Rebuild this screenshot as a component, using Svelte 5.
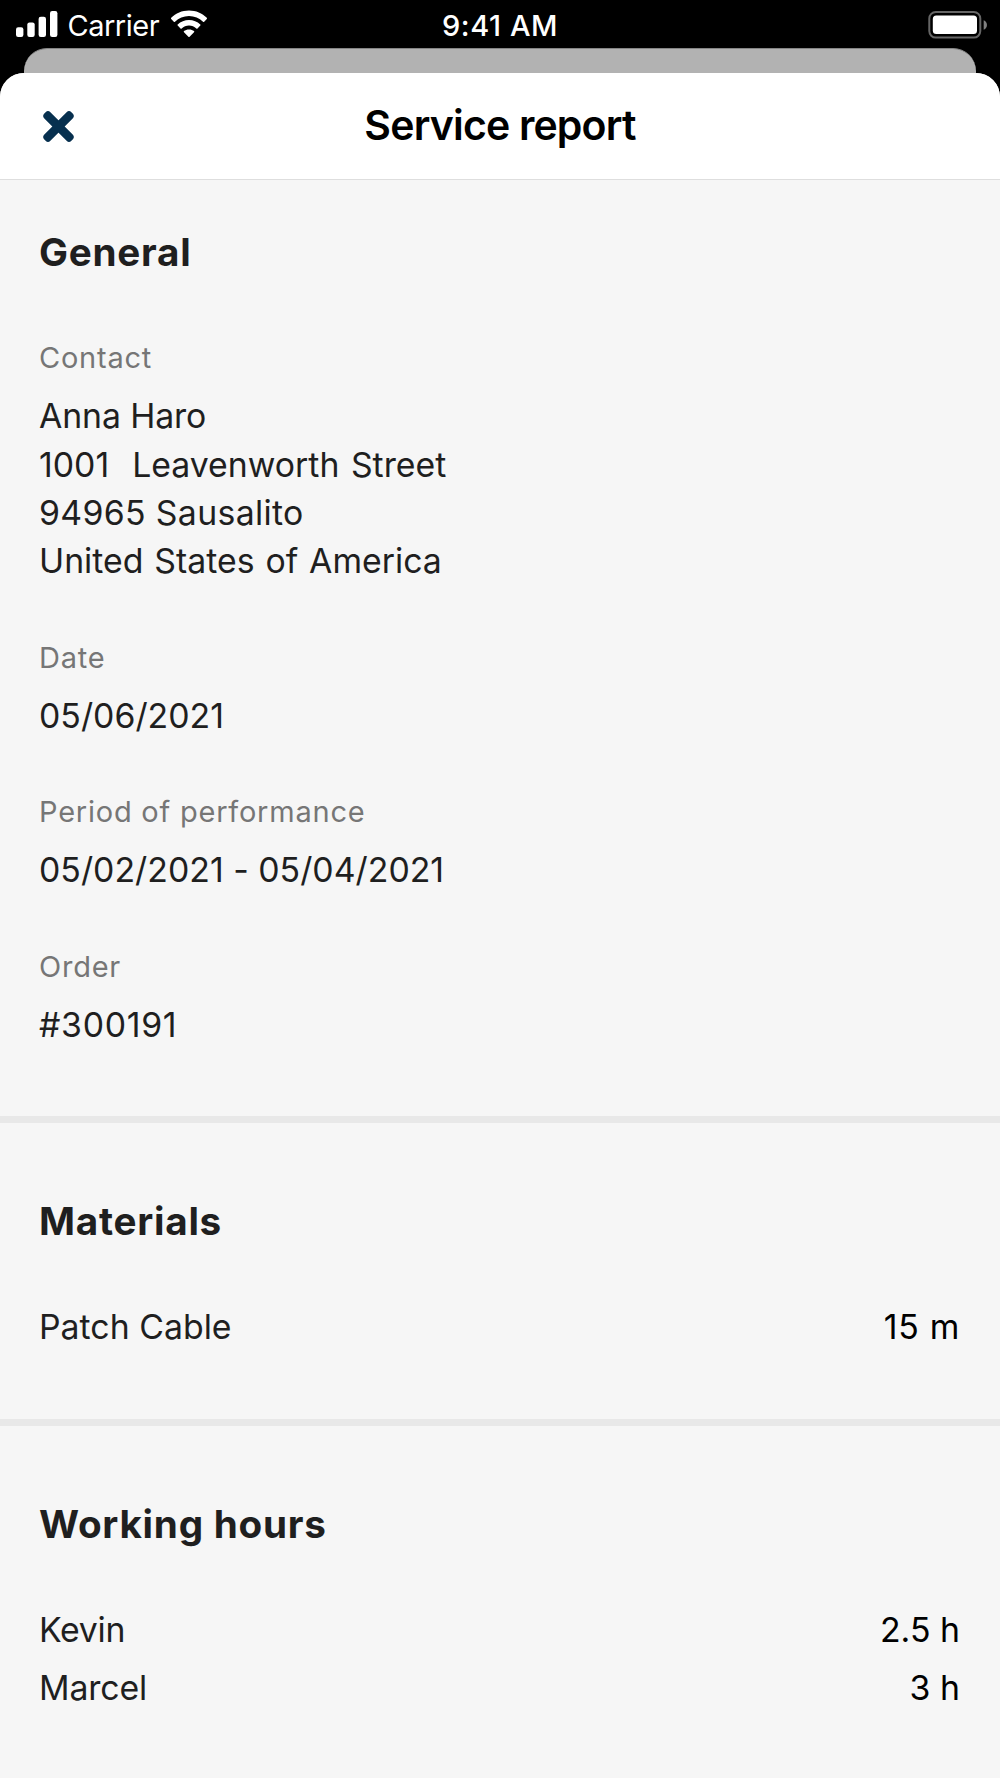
<script>
  const fields = [
    {
      label: 'Contact',
      lines: [
        { text: 'Anna Haro', fit: 'tight' },
        { text: '1001\u00a0 Leavenworth Street', fit: 'street' },
        { text: '94965 Sausalito', fit: 'loose' },
        { text: 'United States of America', fit: 'spaced' },
      ],
    },
    { label: 'Date', lines: [{ text: '05/06/2021', fit: 'plain' }] },
    { label: 'Period of performance', lines: [{ text: '05/02/2021 - 05/04/2021', fit: 'plain' }] },
    { label: 'Order', lines: [{ text: '#300191', fit: 'wide' }] },
  ];

  const lists = [
    { title: 'Materials', rows: [{ name: 'Patch Cable', fit: 'plain', amount: '15 m', amountFit: 'wide' }] },
    {
      title: 'Working hours',
      rows: [
        { name: 'Kevin', fit: 'tighter', amount: '2.5 h', amountFit: 'plain' },
        { name: 'Marcel', fit: 'tight', amount: '3 h', amountFit: 'plain' },
      ],
    },
  ];
</script>

<div class="screen">
  <div class="status">
    <div class="side">
      <svg class="signal" width="42" height="27" viewBox="0 0 42 27" fill="#fff">
        <rect x="0" y="16.2" width="7.4" height="9.8" rx="2.2" />
        <rect x="11.3" y="11.4" width="7.4" height="14.6" rx="2.2" />
        <rect x="22.6" y="5.8" width="7.4" height="20.2" rx="2.2" />
        <rect x="34" y="0" width="7.4" height="26" rx="2.2" />
      </svg>
      <span class="carrier">Carrier</span>
      <svg class="wifi" width="38" height="28" viewBox="0 0 38 28" fill="#fff">
        <path d="M19 .4C26 .4 32.3 3.2 36.8 7.7Q37.4 8.3 36.8 8.9L34.2 11.7Q33.6 12.3 33 11.7C29.3 8.2 24.4 6.1 19 6.1S8.7 8.2 5 11.7Q4.4 12.3 3.8 11.7L1.2 8.9Q.6 8.3 1.2 7.7C5.7 3.2 12 .4 19 .4Z" />
        <path d="M19 10C23.3 10 27.3 11.7 30.3 14.4Q30.9 15 30.3 15.6L27.5 18.4Q26.9 19 26.3 18.4C24.4 16.6 21.8 15.5 19 15.5S13.6 16.6 11.7 18.4Q11.1 19 10.5 18.4L7.7 15.6Q7.1 15 7.7 14.4C10.7 11.7 14.7 10 19 10Z" />
        <path d="M19 19.4C21 19.4 22.7 20.1 24 21.1Q24.6 21.7 24 22.3L19.6 26.7Q19 27.3 18.4 26.7L14 22.3Q13.4 21.7 14 21.1C15.3 20.1 17 19.4 19 19.4Z" />
      </svg>
    </div>
    <span class="clock">9:41 AM</span>
    <div class="side end">
      <svg width="60" height="28" viewBox="0 0 60 28">
        <rect x="1.3" y="1" width="51" height="25.6" rx="6.5" fill="none" stroke="#666" stroke-width="2" />
        <rect x="4.8" y="4.5" width="44.2" height="18.5" rx="3.5" fill="#fff" />
        <path d="M55.7 9.2C60 10.9 60 17.1 55.7 18.8Z" fill="#808080" />
      </svg>
    </div>
  </div>

  <div class="backdrop"></div>

  <main class="sheet">
    <header>
      <button aria-label="Close">
        <svg width="31" height="31" viewBox="-15.5 -15.5 31 31" fill="#07304f">
          <rect x="-19.15" y="-4.3" width="38.3" height="8.6" rx="3.4" transform="rotate(45)" />
          <rect x="-19.15" y="-4.3" width="38.3" height="8.6" rx="3.4" transform="rotate(-45)" />
        </svg>
      </button>
      <h1>Service report</h1>
    </header>

    <section class="general">
      <h2>General</h2>
      <dl>
        {#each fields as field}
          <div class="field">
            <dt>{field.label}</dt>
            {#each field.lines as line}
              <dd class={line.fit}>{line.text}</dd>
            {/each}
          </div>
        {/each}
      </dl>
    </section>

    {#each lists as list}
      <section class="list">
        <h2>{list.title}</h2>
        <div class="rows">
          {#each list.rows as row}
            <div class="row">
              <span class={row.fit}>{row.name}</span>
              <span class="amount {row.amountFit}">{row.amount}</span>
            </div>
          {/each}
        </div>
      </section>
    {/each}
  </main>
</div>

<style>
  :global(body) {
    margin: 0;
    background: #f6f6f6;
  }
  .screen {
    width: 1000px;
    height: 1778px;
    overflow: hidden;
    display: flex;
    flex-direction: column;
    background: #000;
    font-family: Inter, 'Liberation Sans', sans-serif;
    color: #1f1f1f;
    font-size: 33.8px;
    line-height: 48.3px;
    white-space: nowrap;
  }
  h1, h2, dl, dt, dd { margin: 0; }

  .status {
    height: 48px;
    flex: none;
    display: grid;
    grid-template-columns: 1fr auto 1fr;
    color: #fff;
    font-size: 29px;
    line-height: 51px;
  }
  .side {
    display: flex;
    align-items: flex-start;
    padding-left: 16px;
  }
  .signal { margin-top: 11px; }
  .carrier {
    width: 93px;
    margin-left: 9.5px;
    letter-spacing: -0.5px;
  }
  .wifi { margin: 9.7px 0 0 9.9px; }
  .clock {
    font-weight: 500;
    letter-spacing: 0.56px;
  }
  .end {
    justify-content: flex-end;
    padding: 10.5px 12px 0 0;
  }

  .backdrop {
    height: 25px;
    flex: none;
    margin: 0 24px;
    box-sizing: border-box;
    border-top: 1px solid #858585;
    border-radius: 23px 23px 0 0;
    background: #b2b2b2;
  }
  .sheet {
    flex: 1;
    display: flex;
    flex-direction: column;
    border-radius: 24px 24px 0 0;
    background: #f6f6f6;
    overflow: hidden;
  }
  header {
    height: 107px;
    flex: none;
    box-sizing: border-box;
    display: grid;
    grid-template-columns: 1fr auto 1fr;
    align-items: center;
    background: #fff;
    border-bottom: 1px solid #dedede;
  }
  button {
    justify-self: start;
    margin: 0 0 0 43px;
    padding: 0;
    border: 0;
    background: none;
    line-height: 0;
  }
  h1 {
    padding-bottom: 1px;
    font-size: 41px;
    font-weight: 600;
    letter-spacing: -0.82px;
    color: #000;
  }

  section {
    flex: none;
    box-sizing: border-box;
    padding: 0 40px 0 39px;
  }
  h2 {
    font-size: 38.65px;
    line-height: 48px;
    font-weight: 700;
    letter-spacing: 0.75px;
  }
  .general {
    height: 936px;
    padding-top: 48px;
  }
  dl {
    display: flex;
    flex-direction: column;
    gap: 55.2px;
    padding-top: 65.3px;
  }
  dt {
    margin-bottom: 17px;
    font-size: 29px;
    line-height: 34px;
    letter-spacing: 0.77px;
    color: #767676;
  }
  .list {
    height: 303px;
    padding-top: 74px;
    border-top: 7px solid #e8e8e8;
  }
  .list:last-child { height: auto; }
  .rows {
    display: flex;
    flex-direction: column;
    gap: 9.6px;
    padding-top: 58.3px;
  }
  .row {
    display: flex;
    justify-content: space-between;
  }
  .amount { color: #000; }

  .tighter { letter-spacing: -0.3px; }
  .tight { letter-spacing: -0.12px; }
  .plain { letter-spacing: 0.02px; }
  .spaced {
    letter-spacing: 0;
    word-spacing: 1.4px;
  }
  .street {
    letter-spacing: 0;
    word-spacing: 2px;
  }
  .loose { letter-spacing: 0.34px; }
  .wide { letter-spacing: 0.7px; }
</style>
